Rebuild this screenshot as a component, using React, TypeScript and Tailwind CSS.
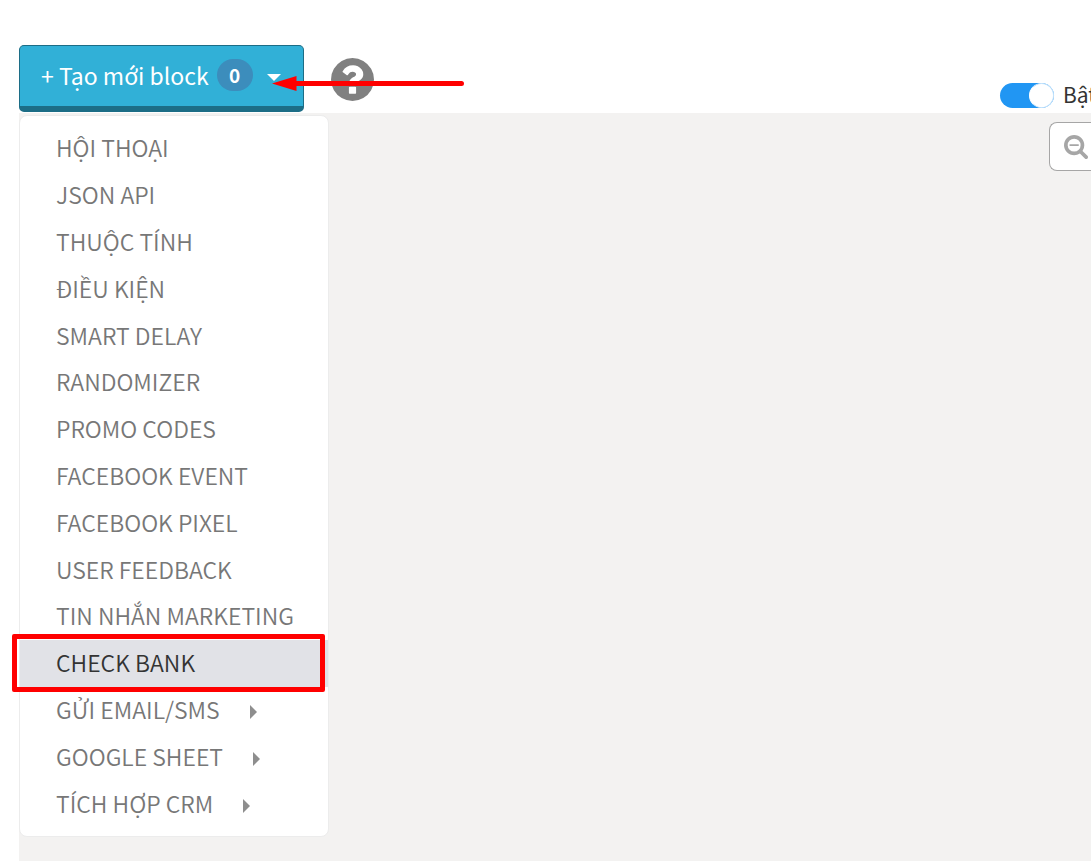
type MenuItem = { label: string; submenu?: boolean; active?: boolean };

const menuItems: MenuItem[] = [
  { label: "HỘI THOẠI" },
  { label: "JSON API" },
  { label: "THUỘC TÍNH" },
  { label: "ĐIỀU KIỆN" },
  { label: "SMART DELAY" },
  { label: "RANDOMIZER" },
  { label: "PROMO CODES" },
  { label: "FACEBOOK EVENT" },
  { label: "FACEBOOK PIXEL" },
  { label: "USER FEEDBACK" },
  { label: "TIN NHẮN MARKETING" },
  { label: "CHECK BANK", active: true },
  { label: "GỬI EMAIL/SMS", submenu: true },
  { label: "GOOGLE SHEET", submenu: true },
  { label: "TÍCH HỢP CRM", submenu: true },
];

function QuestionIcon() {
  return (
    <svg viewBox="128 128 1536 1536" className="size-[43px] fill-[#808080]" aria-hidden="true">
      <path d="M1024 1376v-192q0-14-9-23t-23-9h-192q-14 0-23 9t-9 23v192q0 14 9 23t23 9h192q14 0 23-9t9-23zm256-672q0-88-55.5-163t-138.5-116-170-41q-243 0-371 213-15 24 8 42l132 100q7 6 19 6 16 0 25-12 53-68 86-92 34-24 86-24 48 0 85.5 26t37.5 59q0 38-20 61t-68 45q-63 28-115.5 86.5t-52.5 125.5v36q0 14 9 23t23 9h192q14 0 23-9t9-23q0-19 21.5-49.5t54.5-49.5q32-18 49-28.5t46-35 44.5-48 28-60.5 12.5-81zm384 192q0 209-103 385.5t-279.5 279.5-385.5 103-385.5-103-279.5-279.5-103-385.5 103-385.5 279.5-279.5 385.5-103 385.5 103 279.5 279.5 103 385.5z" />
    </svg>
  );
}

function ZoomOutIcon() {
  return (
    <svg viewBox="64 128 1664 1664" className="size-6 fill-[#a6a6a6]" aria-hidden="true">
      <path d="M1088 800v64q0 13-9.5 22.5t-22.5 9.5h-576q-13 0-22.5-9.5t-9.5-22.5v-64q0-13 9.5-22.5t22.5-9.5h576q13 0 22.5 9.5t9.5 22.5zm128 32q0-185-131.5-316.5t-316.5-131.5-316.5 131.5-131.5 316.5 131.5 316.5 316.5 131.5 316.5-131.5 131.5-316.5zm512 832q0 53-37.5 90.5t-90.5 37.5q-54 0-90-38l-343-342q-179 124-399 124-143 0-273.5-55.5t-225-150-150-225-55.5-273.5 55.5-273.5 150-225 225-150 273.5-55.5 273.5 55.5 225 150 150 225 55.5 273.5q0 220-124 399l343 343q37 37 37 90z" />
    </svg>
  );
}

function Arrow() {
  return (
    <svg
      viewBox="0 0 192 16"
      className="pointer-events-none absolute top-[31px] left-[253px] h-4 w-48 fill-[#ff0000]"
      aria-hidden="true"
    >
      <path d="M0 7.500 24.500 0V5H189.500a2.500 2.500 0 0 1 0 5H24.500V15z" />
    </svg>
  );
}

function Header() {
  return (
    <header className="flex items-start justify-between overflow-hidden pt-[45px] pl-[19px]">
      <div className="relative flex items-start gap-[27px] pb-px">
        <button
          type="button"
          className="flex h-[67px] w-[285px] items-center rounded-[5px] border border-b-[6px] border-[#1c6d86] bg-[#31b0d7] pb-[2px] pl-[21px] text-[23px] leading-8 font-normal text-white"
        >
          <span className="whitespace-nowrap">+ Tạo mới block</span>
          <span className="ml-2 flex h-8 w-9 items-center justify-center rounded-full bg-[#3c8dbc] text-[19px] font-bold">
            0
          </span>
          <svg viewBox="0 0 14 7" className="mt-1 ml-[14px] h-[7px] w-[14px] fill-white" aria-hidden="true">
            <path d="M0 0H14L7 7z" />
          </svg>
        </button>
        <button type="button" aria-label="Help" className="mt-[13px]">
          <QuestionIcon />
        </button>
        <Arrow />
      </div>
      <label className="mt-[33px] flex w-[91px] shrink-0 items-center gap-[9px] text-[21px] leading-8 whitespace-nowrap text-[#333333]">
        <input type="checkbox" defaultChecked className="peer sr-only" />
        <span className="flex h-[25px] w-[54px] shrink-0 justify-start rounded-full bg-gray-300 peer-checked:justify-end peer-checked:bg-[#2196f3]">
          <span className="h-[25px] w-[25px] rounded-full border border-[#c5e3fb] border-l-white bg-white" />
        </span>
        <span className="pb-[2px]">Bật</span>
      </label>
    </header>
  );
}

function BlockMenu() {
  return (
    <nav className="mt-[2px] w-[310px] rounded-lg border border-[#ececec] bg-white py-[9px]">
      <ul className="grid min-h-[702px] auto-rows-fr">
        {menuItems.map((item) => (
          <li key={item.label} className="relative flex">
            <a
              href="#"
              className={
                item.active
                  ? "flex flex-1 items-center bg-[#e1e2e7] pb-[2px] pl-9 text-[23px] leading-8 font-[350] whitespace-nowrap text-[#333333]"
                  : "flex flex-1 items-center pb-[2px] pl-9 text-[23px] leading-8 font-[350] whitespace-nowrap text-[#777777]"
              }
            >
              {item.label}
              {item.submenu && (
                <svg viewBox="0 0 7 14" className="mt-[7px] ml-[30px] h-[14px] w-[7px] fill-[#8e8e8e]" aria-hidden="true">
                  <path d="M0 0V14L7 7z" />
                </svg>
              )}
            </a>
            {item.active && (
              <span className="pointer-events-none absolute -top-[6px] right-[3px] -bottom-[5px] -left-2 rounded-[2px] border-[5px] border-[#ff0000]" />
            )}
          </li>
        ))}
      </ul>
    </nav>
  );
}

export default function App() {
  return (
    <div className="flex min-h-screen flex-col overflow-x-hidden bg-white font-['Noto_Sans_CJK_SC','Noto_Sans',sans-serif]">
      <Header />
      <main className="ml-[19px] flex flex-1 items-start justify-between bg-[#f3f2f1]">
        <BlockMenu />
        <button
          type="button"
          aria-label="Zoom out"
          className="mt-[9px] flex h-[49px] w-[42px] items-center rounded-l-lg border border-r-0 border-[#a6a6a6] bg-white pl-[14px]"
        >
          <ZoomOutIcon />
        </button>
      </main>
    </div>
  );
}
